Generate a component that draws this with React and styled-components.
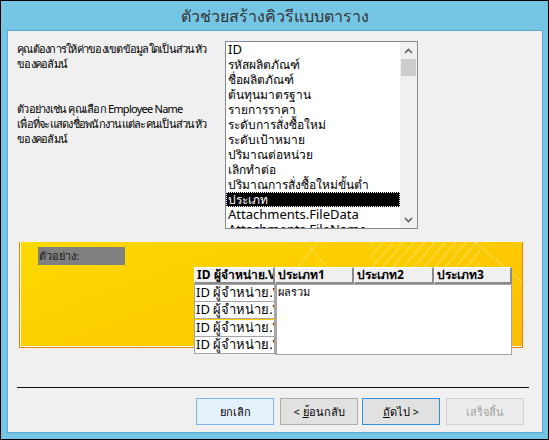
import styled, { createGlobalStyle } from "styled-components";

const GlobalStyle = createGlobalStyle`
  html, body {
    margin: 0;
    padding: 0;
    background: #74c6e4;
  }
  * {
    box-sizing: border-box;
  }
`;

const Window = styled.div`
  width: 549px;
  height: 440px;
  border: 1px solid #000;
  background: #74c6e4;
  padding: 0 5px 6px 6px;
  display: flex;
  flex-direction: column;
  font-family: "Segoe UI", Tahoma, "Noto Sans", sans-serif;
  font-size: 12px;
  color: #000;
`;

const TitleBar = styled.div`
  height: 29px;
  display: flex;
  align-items: center;
  justify-content: center;
  font-size: 16px;
  font-weight: 300;
  color: #333;
  padding-top: 2px;
`;

const Panel = styled.div`
  flex: 1;
  border: 1px solid #5ea9cf;
  background: #f0f0f0;
  display: flex;
  flex-direction: column;
`;

const TopRow = styled.div`
  display: flex;
  padding: 10px 0 0 9px;
`;

const Prompt = styled.div`
  width: 208px;
  font-size: 11px;
  letter-spacing: -0.75px;
  line-height: 15px;
  white-space: nowrap;
  color: #000;
`;

const Paragraph = styled.p`
  margin: ${(p) => (p.$spaced ? "30px" : "0")} 0 0 0;
`;

const ListBox = styled.div`
  width: 193px;
  height: 188px;
  border: 1px solid #828790;
  background: #fff;
  display: flex;
`;

const Items = styled.div`
  flex: 1;
  overflow: hidden;
`;

const Item = styled.div`
  height: 15px;
  line-height: 15px;
  padding-left: 2px;
  white-space: nowrap;
  font-size: ${(p) => (p.$latin ? "13px" : "12px")};
  background: ${(p) => (p.$selected ? "#000" : "transparent")};
  color: ${(p) => (p.$selected ? "#fff" : "#000")};
  outline: ${(p) => (p.$selected ? "1px dotted #fff" : "none")};
  outline-offset: -1px;
`;

const ScrollBar = styled.div`
  width: 17px;
  background: #f0f0f0;
  display: flex;
  flex-direction: column;
  align-items: center;
`;

const Arrow = styled.div`
  height: 17px;
  width: 100%;
  display: flex;
  align-items: center;
  justify-content: center;
`;

const Thumb = styled.div`
  width: 15px;
  height: 17px;
  background: #cdcdcd;
`;

const Track = styled.div`
  flex: 1;
`;

const Preview = styled.div`
  margin: 13px 0 0 11px;
  width: 504px;
  height: 106px;
  border-left: 1px solid #f08000;
  border-right: 1px solid #f08000;
  border-bottom: 1px solid #f08000;
  box-shadow: inset 1px 0 0 #fff, inset 0 -1px 0 #fff;
  padding: 5px 0 0 18px;
  background:
    repeating-linear-gradient(-50deg, transparent 0 6px, rgba(255, 255, 255, 0.18) 6px 8px) 350px 0 / 110px 32px no-repeat,
    linear-gradient(130deg, transparent 0 40%, rgba(255, 255, 255, 0.25) 40% 41%, transparent 41%) 240px 0 / 120px 30px no-repeat,
    linear-gradient(50deg, transparent 0 40%, rgba(255, 255, 255, 0.25) 40% 41%, transparent 41%) 260px 0 / 100px 30px no-repeat,
    linear-gradient(40deg, transparent 0 50%, rgba(255, 255, 255, 0.22) 50% 52%, transparent 52%) 450px 0 / 55px 40px no-repeat,
    linear-gradient(160deg, #ffd900 0%, #fdcc00 55%, #fabd08 100%);
`;

const SampleLabel = styled.div`
  width: 87px;
  height: 18px;
  background: #808080;
  color: #1a1a1a;
  font-size: 11px;
  line-height: 18px;
  padding-left: 1px;
`;

const Grid = styled.div`
  margin: 2px 0 0 156px;
  width: 318px;
`;

const HeaderRow = styled.div`
  display: flex;
  height: 17px;
`;

const HeaderCell = styled.div`
  width: ${(p) => p.$w}px;
  height: 17px;
  background: #f0f0f0;
  border-top: 1px solid #fff;
  border-left: 1px solid #fff;
  border-right: 2px solid #8a8a8a;
  border-bottom: 2px solid #8a8a8a;
  font-weight: bold;
  line-height: 14px;
  padding-left: 2px;
  white-space: nowrap;
  overflow: hidden;
`;

const Body = styled.div`
  display: flex;
`;

const RowHeaders = styled.div`
  width: 81px;
  display: flex;
  flex-direction: column;
`;

const RowCell = styled.div`
  height: ${(p) => p.$h}px;
  background: #fff;
  border: 1px solid #a5a5a5;
  border-top-width: ${(p) => (p.$first ? "1px" : "0")};
  margin-top: ${(p) => (p.$gap ? "1px" : "0")};
  font-size: 13px;
  line-height: 15px;
  padding-left: 1px;
  white-space: nowrap;
  overflow: hidden;
`;

const DataArea = styled.div`
  flex: 1;
  height: 71px;
  background: #fff;
  border: 1px solid #a5a5a5;
  border-left-width: 2px;
  font-size: 11px;
  line-height: 14px;
  padding-left: 1px;
`;

const Separator = styled.div`
  margin: 39px 0 0 9px;
  width: 512px;
  height: 1px;
  background: #111;
`;

const ButtonRow = styled.div`
  display: flex;
  justify-content: flex-end;
  padding-right: 18px;
  margin-top: 10px;
`;

const Button = styled.div`
  width: 78px;
  height: 27px;
  margin-left: ${(p) => p.$gap || 0}px;
  display: flex;
  align-items: center;
  justify-content: center;
  font-size: 11px;
  border: 1px solid
    ${(p) =>
      p.$variant === "hover"
        ? "#7eb4ea"
        : p.$variant === "default"
        ? "#2f8ee0"
        : p.$variant === "disabled"
        ? "#d2d2d2"
        : "#adadad"};
  background: ${(p) =>
    p.$variant === "hover" ? "#e5f1fb" : p.$variant === "disabled" ? "#ececec" : "#e1e1e1"};
  color: ${(p) => (p.$variant === "disabled" ? "#a3a3a3" : "#000")};
  white-space: pre;
`;

const Key = styled.span`
  text-decoration: underline;
`;

const Chevron = ({ down }) => (
  <svg width="9" height="6" viewBox="0 0 9 6">
    <path
      d={down ? "M1 1 L4.5 4.5 L8 1" : "M1 5 L4.5 1.5 L8 5"}
      fill="none"
      stroke="#606060"
      strokeWidth="1.6"
    />
  </svg>
);

const fields = [
  "ID",
  "รหัสผลิตภัณฑ์",
  "ชื่อผลิตภัณฑ์",
  "ต้นทุนมาตรฐาน",
  "รายการราคา",
  "ระดับการสั่งซื้อใหม่",
  "ระดับเป้าหมาย",
  "ปริมาณต่อหน่วย",
  "เลิกทำต่อ",
  "ปริมาณการสั่งซื้อใหม่ขั้นต่ำ",
  "ประเภท",
  "Attachments.FileData",
  "Attachments.FileName",
];

const rows = [
  { h: 18, first: true },
  { h: 17 },
  { h: 17, gap: true },
  { h: 17 },
];

const App = () => {
  return (
    <>
      <GlobalStyle />
      <Window>
        <TitleBar>ตัวช่วยสร้างคิวรีแบบตาราง</TitleBar>
        <Panel>
          <TopRow>
            <Prompt>
              <Paragraph>
                คุณต้องการให้ค่าของเขตข้อมูลใดเป็นส่วนหัว
                <br />
                ของคอลัมน์
              </Paragraph>
              <Paragraph $spaced>
                ตัวอย่างเช่น คุณเลือก Employee Name
                <br />
                เพื่อที่จะแสดงชื่อพนักงานแต่ละคนเป็นส่วนหัว
                <br />
                ของคอลัมน์
              </Paragraph>
            </Prompt>
            <ListBox>
              <Items>
                {fields.map((f) => (
                  <Item key={f} $selected={f === "ประเภท"} $latin={/^[A-Za-z]/.test(f)}>
                    {f}
                  </Item>
                ))}
              </Items>
              <ScrollBar>
                <Arrow>
                  <Chevron />
                </Arrow>
                <Thumb />
                <Track />
                <Arrow>
                  <Chevron down />
                </Arrow>
              </ScrollBar>
            </ListBox>
          </TopRow>

          <Preview>
            <SampleLabel>ตัวอย่าง:</SampleLabel>
            <Grid>
              <HeaderRow>
                <HeaderCell $w={81}>ID ผู้จำหน่าย.Value</HeaderCell>
                <HeaderCell $w={79}>ประเภท1</HeaderCell>
                <HeaderCell $w={80}>ประเภท2</HeaderCell>
                <HeaderCell $w={78}>ประเภท3</HeaderCell>
              </HeaderRow>
              <Body>
                <RowHeaders>
                  {rows.map((r, i) => (
                    <RowCell key={i} $h={r.h} $first={r.first} $gap={r.gap}>
                      ID ผู้จำหน่าย.Value
                    </RowCell>
                  ))}
                </RowHeaders>
                <DataArea>ผลรวม</DataArea>
              </Body>
            </Grid>
          </Preview>

          <Separator />

          <ButtonRow>
            <Button $variant="hover">ยกเลิก</Button>
            <Button $gap={6}>
              {"< "}
              <Key>ย</Key>้อนกลับ
            </Button>
            <Button $variant="default" $gap={4}>
              <Key>ถั</Key>ดไป{" >"}
            </Button>
            <Button $variant="disabled" $gap={6}>
              เสร็จสิ้น
            </Button>
          </ButtonRow>
        </Panel>
      </Window>
    </>
  );
};

export default App;
